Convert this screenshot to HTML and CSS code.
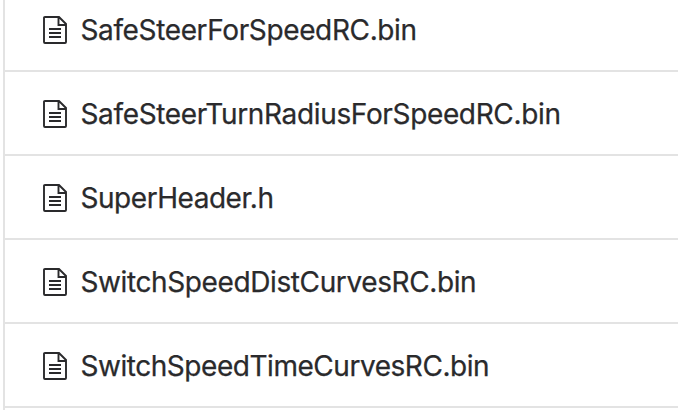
FILE: index.html
```html
<!DOCTYPE html>
<html lang="en">
<head>
<meta charset="utf-8">
<title>Files</title>
<link rel="stylesheet" href="styles.css">
</head>
<body>
<svg class="defs" aria-hidden="true"><symbol id="file" viewBox="0 0 24 28"><path class="line" d="M16 1H2Q1 1 1 2V26Q1 27 2 27H22Q23 27 23 26V8zM15.500 1V9H23"/><path class="line" d="M6 13H18M6 17H18M6 21H18"/></symbol></svg>
<ul class="files">
<li class="file"><svg class="icon"><use href="#file"/></svg><span class="name n1">SafeSteerForSpeedRC.bin</span></li>
<li class="file"><svg class="icon"><use href="#file"/></svg><span class="name n2">SafeSteerTurnRadiusForSpeedRC.bin</span></li>
<li class="file"><svg class="icon"><use href="#file"/></svg><span class="name n3">SuperHeader.h</span></li>
<li class="file"><svg class="icon"><use href="#file"/></svg><span class="name n4">SwitchSpeedDistCurvesRC.bin</span></li>
<li class="file"><svg class="icon"><use href="#file"/></svg><span class="name n5">SwitchSpeedTimeCurvesRC.bin</span></li>
</ul>
</body>
</html>
```

FILE: styles.css
```css
body { margin: 0; height: 410px; overflow: hidden; background: #fff; }
.defs { display: none; }
.files { display: flow-root; box-sizing: border-box; height: 410px; list-style: none; margin: 0 0 0 3px; padding: 0; border-left: 2px solid #e3e3e3; }
.file { display: flex; align-items: center; box-sizing: border-box; height: 84px; padding: 2px 0 0 38px; border-bottom: 2px solid #e3e3e3; }
.file:first-child { height: 72px; padding-top: 0; align-items: flex-start; }
.file:first-child .icon { margin-top: 16px; }
.file:first-child .name { margin-top: 10px; }
.icon { flex: none; width: 24px; height: 28px; margin-right: 13.500px; overflow: visible; }
.line { fill: none; stroke: #2a2a2c; stroke-width: 1.900; }
.name { font: 400 28px/40px Inter, sans-serif; color: #2a2a2c; white-space: nowrap; -webkit-text-stroke: 0.250px #2a2a2c; }
.n1 { letter-spacing: -0.370px; }
.n2 { letter-spacing: -0.350px; }
.n3 { letter-spacing: -0.460px; }
.n4 { letter-spacing: -0.390px; }
.n5 { letter-spacing: -0.460px; }
```
